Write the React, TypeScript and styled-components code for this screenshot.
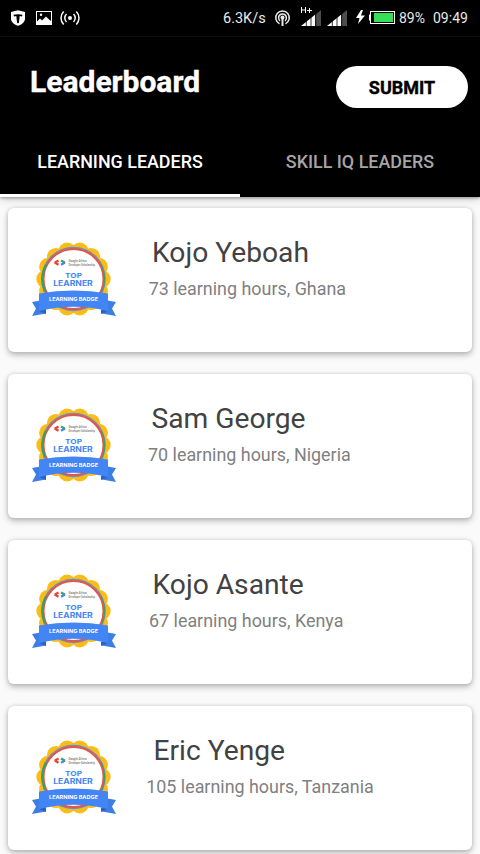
import React from "react";
import styled, { createGlobalStyle } from "styled-components";

const GlobalStyle = createGlobalStyle`
  * { box-sizing: border-box; }
  body { margin: 0; background: #fafafa; font-family: Roboto, sans-serif; overflow: hidden; }
`;

const Screen = styled.div`
  width: 480px;
  height: 854px;
  overflow: hidden;
  display: flex;
  flex-direction: column;
  background: #fafafa;
`;

const StatusBar = styled.div`
  flex: none;
  height: 37px;
  display: flex;
  justify-content: space-between;
  background: #000;
  border-bottom: 1px solid #0e0e0e;
  color: #e9e9e9;
`;

const StatusGroup = styled.div`
  display: flex;
  height: 36px;
`;

const StatusText = styled.span<{ $width: number; $size: number }>`
  width: ${(p) => p.$width}px;
  font-size: ${(p) => p.$size}px;
  line-height: 37px;
  white-space: nowrap;
`;

const Header = styled.header`
  flex: none;
  height: 160px;
  background: #000;
  color: #fff;
  position: relative;
  box-shadow: 0 1px 3px rgba(0, 0, 0, 0.35), 0 2px 9px rgba(0, 0, 0, 0.18);
`;

const TitleRow = styled.div`
  height: 90px;
  display: flex;
  justify-content: space-between;
  align-items: flex-start;
  padding: 29px 12px 0 30px;
`;

const Title = styled.h1`
  margin: -2px 0 0;
  font-size: 30px;
  line-height: 36px;
  font-weight: 700;
  -webkit-text-stroke: 0.4px #fff;
`;

const SubmitButton = styled.button`
  width: 132px;
  height: 42px;
  padding: 0;
  border: 0;
  border-radius: 21px;
  background: #fff;
  color: #000;
  font: 700 18px/43px Roboto, sans-serif;
  -webkit-text-stroke: 0.4px #000;
`;

const Tabs = styled.nav`
  display: grid;
  grid-template-columns: 1fr 1fr;
  height: 70px;
`;

const Tab = styled.div<{ $active?: boolean }>`
  text-align: center;
  font-size: 17.9px;
  font-weight: 500;
  line-height: 69px;
  height: 70px;
  color: ${(p) => (p.$active ? "#fff" : "#a6a6a6")};
  border-bottom: ${(p) => (p.$active ? "3px solid #fff" : "0")};
`;

const List = styled.main`
  display: flex;
  flex-direction: column;
  gap: 22px;
  padding: 11px 8px 0;
`;

const Card = styled.article`
  flex: none;
  height: 144px;
  display: flex;
  padding: 26px 0 0 22px;
  background: #fff;
  border-radius: 6px;
  box-shadow: 0 3px 6px rgba(0, 0, 0, 0.25), 0 0 4px rgba(0, 0, 0, 0.13);
`;

const CardText = styled.div`
  margin-left: 16px;
`;

const Name = styled.div<{ $indent: number }>`
  padding-left: ${(p) => p.$indent}px;
  font-size: 28.2px;
  line-height: 37px;
  color: #424242;
`;

const Detail = styled.div<{ $indent: number }>`
  padding-left: ${(p) => p.$indent}px;
  font-size: 17.9px;
  line-height: 36px;
  color: #808080;
`;

const leaders = [
  { name: "Kojo Yeboah", detail: "73 learning hours, Ghana", nameIndent: 6, detailIndent: 2.7 },
  { name: "Sam George", detail: "70 learning hours, Nigeria", nameIndent: 5.5, detailIndent: 2 },
  { name: "Kojo Asante", detail: "67 learning hours, Kenya", nameIndent: 6.5, detailIndent: 3 },
  { name: "Eric Yenge", detail: "105 learning hours, Tanzania", nameIndent: 7.5, detailIndent: 0.2 },
];

function NotificationIcons() {
  return (
    <svg width="90" height="36" viewBox="0 0 90 36" fill="none">
      <path d="M18 10.3 25 12v6.5c0 3.4-2.5 5.6-7 7.3-4.500-1.700-7-3.900-7-7.300V12z" fill="#fff" />
      <path d="M13.500 14.800c3-.9 6-.9 9 0l-.5 1.700-2.300-.4-.8 6.600-.9.800-.9-.8-.8-6.600-2.300.4z" fill="#000" />
      <path fillRule="evenodd" d="M36 11h16v14H36zM37 12v9.500l3-3 2 2 4-4 2 2 3 2.500V12z" fill="#fff" />
      <circle cx="41" cy="14.800" r="1.200" fill="#fff" />
      <circle cx="70" cy="18" r="2" fill="#fff" />
      <path d="M66.500 14a5.600 5.600 0 0 0 0 8M73.500 14a5.600 5.600 0 0 1 0 8M63.700 11.500a9.200 9.200 0 0 0 0 13M76.300 11.500a9.200 9.200 0 0 1 0 13" stroke="#fff" strokeWidth="1.500" />
    </svg>
  );
}

function SignalBars({ x }: { x: number }) {
  return (
    <g transform={`translate(${x} 0)`}>
      <path d="M0 26 14.300 14.500V26z" fill="#fff" />
      <path d="M15 14 20 10v16h-5z" fill="#4c4c4c" />
      <path d="M5.300 20v6M10 16v10M14.700 11v15" stroke="#000" strokeWidth="0.800" />
    </g>
  );
}

function NetworkIcons() {
  return (
    <svg width="80" height="36" viewBox="272 0 80 36" fill="none">
      <g stroke="#e9e9e9" strokeWidth="1.500">
        <path d="M279.500 23.800a6.800 6.800 0 1 1 6 0M280 20.800a3.900 3.900 0 1 1 5 0" />
        <path d="M282.500 18v8" strokeWidth="2" />
      </g>
      <circle cx="282.500" cy="17.500" r="2" fill="#e9e9e9" />
      <path d="M301.500 7v6M305.500 7v6M301.500 10h4M307 10.500h5M309.500 8v5" stroke="#fff" />
      <SignalBars x={301} />
      <SignalBars x={327} />
    </svg>
  );
}

function BatteryIcon() {
  return (
    <svg width="47" height="36" viewBox="352 0 47 36">
      <path d="m361 10-5 8h3.500l-1.500 6 7-8.500h-4l2-5.500z" fill="#fff" />
      <path d="M369 14.500h1.500v6H369z" fill="#fff" />
      <rect x="370.500" y="11.500" width="24" height="12" fill="none" stroke="#fff" />
      <path d="M374 13h19v9h-19z" fill="#36df56" />
    </svg>
  );
}

const lobes = Array.from({ length: 14 }, (_, i) => {
  const angle = ((i + 0.5) / 14) * Math.PI * 2;
  return { cx: 43.5 + 28.2 * Math.sin(angle), cy: 45 - 28.2 * Math.cos(angle) };
});

function LearnerBadge() {
  return (
    <svg width="100" height="90" viewBox="0 0 100 90">
      {lobes.map((lobe, i) => (
        <circle key={i} cx={lobe.cx} cy={lobe.cy} r="9" fill="#fbbc16" />
      ))}
      <circle cx="43.500" cy="45" r="32.300" fill="#6a91c4" />
      <circle cx="43.500" cy="45" r="30" fill="#fff" stroke="#e5554b" strokeWidth="2" />
      <path d="M16 30.500a31.400 31.400 0 0 0-1 27" stroke="#34a36a" strokeWidth="2.200" fill="none" />
      <path d="M71 30.500a31.400 31.400 0 0 1 1 27" stroke="#34a36a" strokeWidth="1" fill="none" />
      <g fill="none" strokeWidth="2.200">
        <path d="m28.500 26.500-3.800 2.200" stroke="#ea4335" />
        <path d="m24.700 28.500 3.800 2.200" stroke="#ea4335" />
        <path d="m31 26.500 4 2.200" stroke="#34a853" />
        <path d="m35 28.500-4 2.200" stroke="#4285f4" />
      </g>
      <g fontFamily="Roboto, sans-serif" fontSize="3" fontWeight="500" fill="#777">
        <text x="38.500" y="28" textLength="18">Google Africa</text>
        <text x="38.500" y="31.500" textLength="26.500" lengthAdjust="spacingAndGlyphs">Developer Scholarship</text>
      </g>
      <path d="m2 68 14-2.500v14L2 82l4-7.500z" fill="#3c7de6" />
      <path d="m86 68-14-2.500v14L86 82l-4-7.500z" fill="#3c7de6" />
      <path d="m9 77 7-1.500V80zM78 77l-7-1.500V80z" fill="#2b62bd" />
      <path d="M9 59.500Q43.500 53.500 78 59.500V77Q43.500 68.500 9 77z" fill="#4285f4" />
      <g fontFamily="Inter, sans-serif" fontWeight="700" textAnchor="middle">
        <text x="43.500" y="44.200" fontSize="6.800" fill="#4285f4" textLength="17" lengthAdjust="spacingAndGlyphs">TOP</text>
        <text x="43" y="51.500" fontSize="7" fill="#4285f4" textLength="39.500" lengthAdjust="spacingAndGlyphs">LEARNER</text>
        <text x="43.500" y="66.500" fontSize="5" fill="#fff" textLength="49" lengthAdjust="spacingAndGlyphs">LEARNING BADGE</text>
      </g>
    </svg>
  );
}

export default function App() {
  return (
    <>
      <GlobalStyle />
      <Screen>
        <StatusBar>
          <NotificationIcons />
          <StatusGroup>
            <StatusText $width={49} $size={14.5}>6.3K/s</StatusText>
            <NetworkIcons />
            <BatteryIcon />
            <StatusText $width={34} $size={14}>89%</StatusText>
            <StatusText $width={47} $size={14}>09:49</StatusText>
          </StatusGroup>
        </StatusBar>
        <Header>
          <TitleRow>
            <Title>Leaderboard</Title>
            <SubmitButton>SUBMIT</SubmitButton>
          </TitleRow>
          <Tabs>
            <Tab $active>LEARNING LEADERS</Tab>
            <Tab>SKILL IQ LEADERS</Tab>
          </Tabs>
        </Header>
        <List>
          {leaders.map((l) => (
            <Card key={l.name}>
              <LearnerBadge />
              <CardText>
                <Name $indent={l.nameIndent}>{l.name}</Name>
                <Detail $indent={l.detailIndent}>{l.detail}</Detail>
              </CardText>
            </Card>
          ))}
        </List>
      </Screen>
    </>
  );
}
